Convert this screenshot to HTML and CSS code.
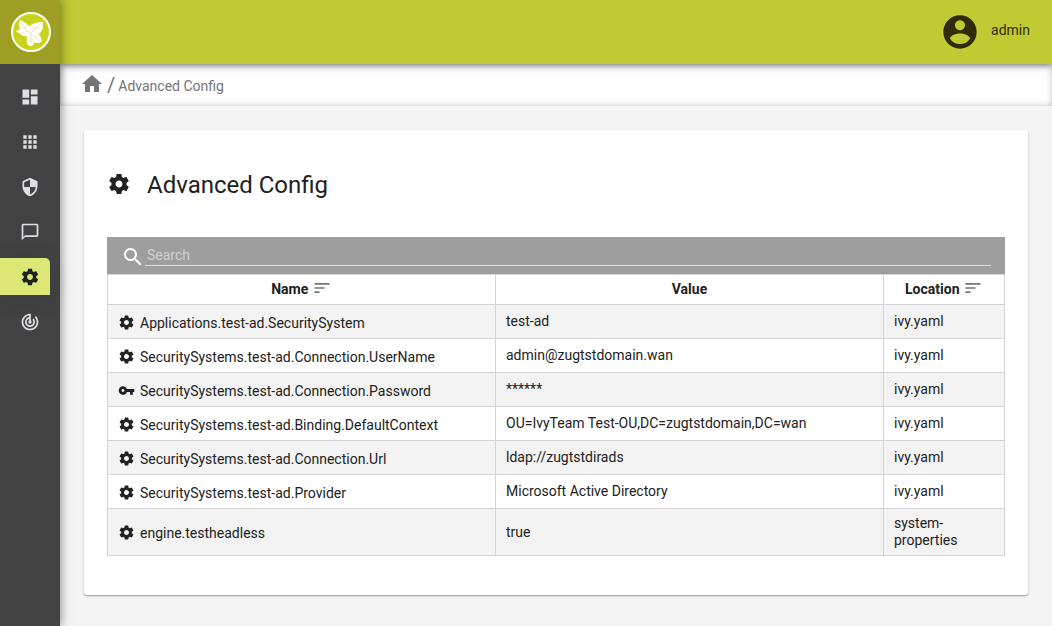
FILE: index.html
```html
<!DOCTYPE html>
<html lang="en">
<head>
<meta charset="utf-8">
<meta name="viewport" content="width=device-width, initial-scale=1">
<title>Advanced Config</title>
<link rel="stylesheet" href="styles.css">
</head>
<body>
<svg class="sprite" aria-hidden="true">
  <symbol id="gear" viewBox="0 0 24 24"><path d="M19.43 12.98c.04-.32.07-.64.07-.98s-.03-.66-.07-.98l2.11-1.65c.19-.15.24-.42.12-.64l-2-3.46c-.12-.22-.39-.3-.61-.22l-2.49 1c-.52-.4-1.08-.73-1.69-.98l-.38-2.65C14.46 2.18 14.25 2 14 2h-4c-.25 0-.46.18-.49.42l-.38 2.65c-.61.25-1.17.59-1.69.98l-2.49-1c-.23-.09-.49 0-.61.22l-2 3.46c-.13.22-.07.49.12.64l2.11 1.65c-.04.32-.07.65-.07.98s.03.66.07.98l-2.11 1.65c-.19.15-.24.42-.12.64l2 3.46c.12.22.39.3.61.22l2.49-1c.52.4 1.08.73 1.69.98l.38 2.65c.03.24.24.42.49.42h4c.25 0 .46-.18.49-.42l.38-2.65c.61-.25 1.17-.59 1.69-.98l2.49 1c.23.09.49 0 .61-.22l2-3.46c.12-.22.07-.49-.12-.64l-2.11-1.65zM12 15.5c-1.93 0-3.5-1.57-3.5-3.5s1.57-3.5 3.5-3.5 3.5 1.57 3.5 3.5-1.57 3.5-3.5 3.5z"/></symbol>
  <symbol id="key" viewBox="0 0 24 24"><path d="M12.65 10C11.83 7.67 9.61 6 7 6c-3.31 0-6 2.69-6 6s2.69 6 6 6c2.61 0 4.83-1.67 5.65-4H17v4h4v-4h2v-4H12.65zM7 14c-1.1 0-2-.9-2-2s.9-2 2-2 2 .9 2 2-.9 2-2 2z"/></symbol>
  <symbol id="sort" viewBox="0 0 24 24"><path d="M3 18h6v-2H3v2zM3 6v2h18V6H3zm0 7h12v-2H3v2z"/></symbol>
</svg>
<div class="app">
  <aside class="sidebar">
    <a class="logo" href="#" aria-label="Home">
      <svg viewBox="0 0 40 40" width="40" height="40">
        <circle cx="20" cy="20" r="19" fill="#c8d41c" stroke="#fff" stroke-width="2"/>
        <g fill="#fff">
          <path d="M20 22C17 26 9 24 9 21c-2 0-4-1-4-2 2-1 4-1 4-3-2-2-1-5 0-8 3 1 6 3 8 5 2 1 3 4 3 9z"/>
          <path d="M18 23c-1-5-1-8 2-10 3-2 7-3 12-3-1 3 1 5-1 8-2 5-7 6-13 5z"/>
          <path d="M19 21c5-2 8 0 9 2 2 1 2 3 3 6-2 2-4 2-6 2-3-1-6-5-6-10z"/>
          <path d="M20 22c-4 0-5 2-4 5-1 2 0 4 1 6 1 1 3 1 4 1 2-1 2-3 2-5 1-3 0-5-3-7z"/>
        </g>
        <path d="M19 22L10 10M15 16v-4M15 16h-5M17 19l-6 2M19 22l11-11M23 18v-4M25 16h4M20 22l9 7M24 25h3M20 22v9M20 27l-2 2M20 26l2 2" fill="none" stroke="#d8e07a" stroke-width=".6"/>
      </svg>
    </a>
    <nav class="menu" aria-label="Main">
      <a href="#" aria-label="Dashboard"><svg viewBox="0 0 24 24"><path d="M3 13h8V3H3v10zm0 8h8v-6H3v6zm10 0h8V11h-8v10zm0-18v6h8V3h-8z"/></svg></a>
      <a href="#" aria-label="Applications"><svg viewBox="0 0 24 24"><path d="M4 8h4V4H4v4zm6 12h4v-4h-4v4zm-6 0h4v-4H4v4zm0-6h4v-4H4v4zm6 0h4v-4h-4v4zm6-10v4h4V4h-4zm-6 4h4V4h-4v4zm6 6h4v-4h-4v4zm0 6h4v-4h-4v4z"/></svg></a>
      <a href="#" aria-label="Security"><svg viewBox="0 0 24 24"><path d="M12 1L3 5v6c0 5.55 3.84 10.74 9 12 5.16-1.26 9-6.45 9-12V5l-9-4zm0 10.99h7c-.53 4.12-3.28 7.79-7 8.94V12H5V6.3l7-3.11v8.8z"/></svg></a>
      <a href="#" aria-label="Messages"><svg viewBox="0 0 24 24"><path d="M20 2H4c-1.100 0-2 .9-2 2v18l4-4h14c1.100 0 2-.9 2-2V4c0-1.100-.9-2-2-2zm0 14H6l-2 2V4h16v12z"/></svg></a>
      <a class="active" href="#" aria-label="Configuration"><svg><use href="#gear"/></svg></a>
      <a href="#" aria-label="Monitoring"><svg viewBox="0 0 24 24"><path d="M19.070 4.930l-1.410 1.410C19.100 7.790 20 9.790 20 12c0 4.420-3.580 8-8 8s-8-3.580-8-8c0-4.080 3.050-7.440 7-7.930v2.020C8.160 6.570 6 9.030 6 12c0 3.310 2.690 6 6 6s6-2.690 6-6c0-1.660-.67-3.160-1.760-4.240l-1.410 1.410C15.550 9.900 16 10.900 16 12c0 2.210-1.790 4-4 4s-4-1.790-4-4c0-1.860 1.280-3.410 3-3.860v2.140c-.6.350-1 .980-1 1.720 0 1.100.9 2 2 2s2-.9 2-2c0-.74-.4-1.380-1-1.720V2h-1C6.480 2 2 6.480 2 12s4.480 10 10 10 10-4.480 10-10c0-2.760-1.120-5.260-2.930-7.070z"/></svg></a>
    </nav>
  </aside>
  <div class="main">
    <header class="topbar">
      <a class="user" href="#">
        <svg viewBox="0 0 24 24"><path d="M12 2C6.480 2 2 6.480 2 12s4.480 10 10 10 10-4.480 10-10S17.520 2 12 2zm0 3c1.660 0 3 1.340 3 3s-1.340 3-3 3-3-1.340-3-3 1.340-3 3-3zm0 14.200c-2.500 0-4.710-1.280-6-3.220.03-1.990 4-3.080 6-3.080 1.990 0 5.970 1.090 6 3.080-1.290 1.940-3.500 3.220-6 3.220z"/></svg>
        <span>admin</span>
      </a>
    </header>
    <nav class="breadcrumb" aria-label="Breadcrumb">
      <a class="home" href="#" aria-label="Home"><svg viewBox="0 0 24 24"><path d="M10 20v-6h4v6h5v-8h3L12 3 2 12h3v8z"/></svg></a>
      <span class="slash">/</span>
      <a class="current" href="#">Advanced Config</a>
    </nav>
    <main class="content">
      <section class="card">
        <h1><svg><use href="#gear"/></svg>Advanced Config</h1>
        <div class="search">
          <label for="search" aria-label="Search"><svg viewBox="0 0 24 24"><path d="M15.500 14h-.79l-.28-.27C15.410 12.590 16 11.110 16 9.500 16 5.910 13.090 3 9.500 3S3 5.910 3 9.500 5.910 16 9.500 16c1.610 0 3.090-.59 4.230-1.570l.27.28v.79l5 4.990L20.490 19l-4.990-5zm-6 0C7.010 14 5 11.990 5 9.500S7.010 5 9.500 5 14 7.010 14 9.500 11.990 14 9.500 14z"/></svg></label>
          <input id="search" type="text" placeholder="Search">
        </div>
        <table>
          <colgroup><col><col><col class="location"></colgroup>
          <thead><tr>
            <th>Name <svg><use href="#sort"/></svg></th>
            <th>Value</th>
            <th>Location <svg><use href="#sort"/></svg></th>
          </tr></thead>
          <tbody>
            <tr><td><span class="name"><svg><use href="#gear"/></svg>Applications.test-ad.SecuritySystem</span></td><td>test-ad</td><td>ivy.yaml</td></tr>
            <tr><td><span class="name"><svg><use href="#gear"/></svg>SecuritySystems.test-ad.Connection.UserName</span></td><td>admin@zugtstdomain.wan</td><td>ivy.yaml</td></tr>
            <tr><td><span class="name"><svg><use href="#key"/></svg>SecuritySystems.test-ad.Connection.Password</span></td><td>******</td><td>ivy.yaml</td></tr>
            <tr><td><span class="name"><svg><use href="#gear"/></svg>SecuritySystems.test-ad.Binding.DefaultContext</span></td><td>OU=IvyTeam Test-OU,DC=zugtstdomain,DC=wan</td><td>ivy.yaml</td></tr>
            <tr><td><span class="name"><svg><use href="#gear"/></svg>SecuritySystems.test-ad.Connection.Url</span></td><td>ldap://zugtstdirads</td><td>ivy.yaml</td></tr>
            <tr><td><span class="name"><svg><use href="#gear"/></svg>SecuritySystems.test-ad.Provider</span></td><td>Microsoft Active Directory</td><td>ivy.yaml</td></tr>
            <tr><td><span class="name"><svg><use href="#gear"/></svg>engine.testheadless</span></td><td>true</td><td>system-properties</td></tr>
          </tbody>
        </table>
      </section>
    </main>
  </div>
</div>
</body>
</html>
```
FILE: styles.css
```css
* { box-sizing: border-box; }
body {
  margin: 0;
  font: 14px/17px Roboto, sans-serif;
  color: #212121;
  background: #f4f4f4;
}
a { color: inherit; text-decoration: none; }
svg { fill: currentColor; display: block; }
.sprite { display: none; }
.app { display: flex; min-height: 100vh; }

.sidebar {
  width: 60px;
  flex: none;
  background: #424242;
  box-shadow: 0 0 10px rgba(0, 0, 0, .5);
  z-index: 2;
}
.logo {
  height: 64px;
  padding-left: 11px;
  display: flex;
  align-items: center;
  background: #9e9d24;
}
.menu {
  padding: 14px 10px 0 0;
  display: flex;
  flex-direction: column;
  gap: 8px;
  color: #dee0e5;
}
.menu a {
  height: 37px;
  padding-left: 20px;
  display: flex;
  align-items: center;
}
.menu svg { width: 20px; height: 20px; }
.menu .active {
  background: #dce775;
  color: #212121;
  border-radius: 0 5px 0 0;
  box-shadow: 0 4px 16px rgba(50, 56, 62, .6);
}

.main { flex: 1; min-width: 0; display: flex; flex-direction: column; }
.topbar {
  height: 64px;
  padding: 0 22px;
  display: flex;
  align-items: center;
  justify-content: flex-end;
  background: #c0ca33;
  color: #302c0a;
  box-shadow: 0 1px 8px rgba(0, 0, 0, .5);
  z-index: 1;
}
.user { display: flex; align-items: center; gap: 11px; }
.user svg { width: 40px; height: 40px; }
.user span { padding-bottom: 3px; }

.breadcrumb {
  height: 42px;
  padding: 0 20px;
  display: flex;
  align-items: center;
  gap: 3px;
  background: #fff;
  color: #757575;
  box-shadow: inset 0 0 6px rgba(0, 0, 0, .25);
}
.breadcrumb svg { width: 24px; height: 24px; }
.home { padding-bottom: 2px; }
.current { padding-top: 2px; }
.slash { font-size: 20px; }

.content { padding: 24px; }
.card {
  padding: 40px 23px 39px;
  background: #fff;
  border-radius: 3px;
  box-shadow: 0 1px 3px rgba(0, 0, 0, .2), 0 1px 1px rgba(0, 0, 0, .2);
}
h1 {
  margin: 0 0 36px;
  display: flex;
  align-items: center;
  gap: 16px;
  font-size: 24px;
  line-height: 31px;
  font-weight: 400;
}
h1 svg { width: 24px; height: 24px; margin-bottom: 3px; }

.search {
  height: 37px;
  padding: 0 14px;
  display: flex;
  align-items: center;
  background: #9e9e9e;
  color: #fff;
}
.search label { padding-top: 2px; }
.search svg { width: 24px; height: 24px; }
.search input {
  flex: 1;
  height: 21px;
  padding: 0 2px;
  border: 0;
  border-bottom: 1px solid #dcdcdc;
  outline: 0;
  background: none;
  color: inherit;
  font: inherit;
}
.search input::placeholder { color: #d0d0d0; opacity: 1; }

table { width: 100%; table-layout: fixed; border-collapse: collapse; }
.location { width: 121px; }
th, td { border: 1px solid #d5d5d5; padding: 6px 10px; }
th svg {
  display: inline-block;
  width: 20px;
  height: 20px;
  margin: -4px 0 0;
  vertical-align: middle;
  color: #757575;
}
td { height: 34px; }
tbody tr:nth-child(odd) { background: #f3f3f3; }
.name { display: flex; align-items: center; gap: 5px; padding-top: 3px; }
.name svg { width: 17px; height: 17px; margin: -1px 0 1px; }
```
